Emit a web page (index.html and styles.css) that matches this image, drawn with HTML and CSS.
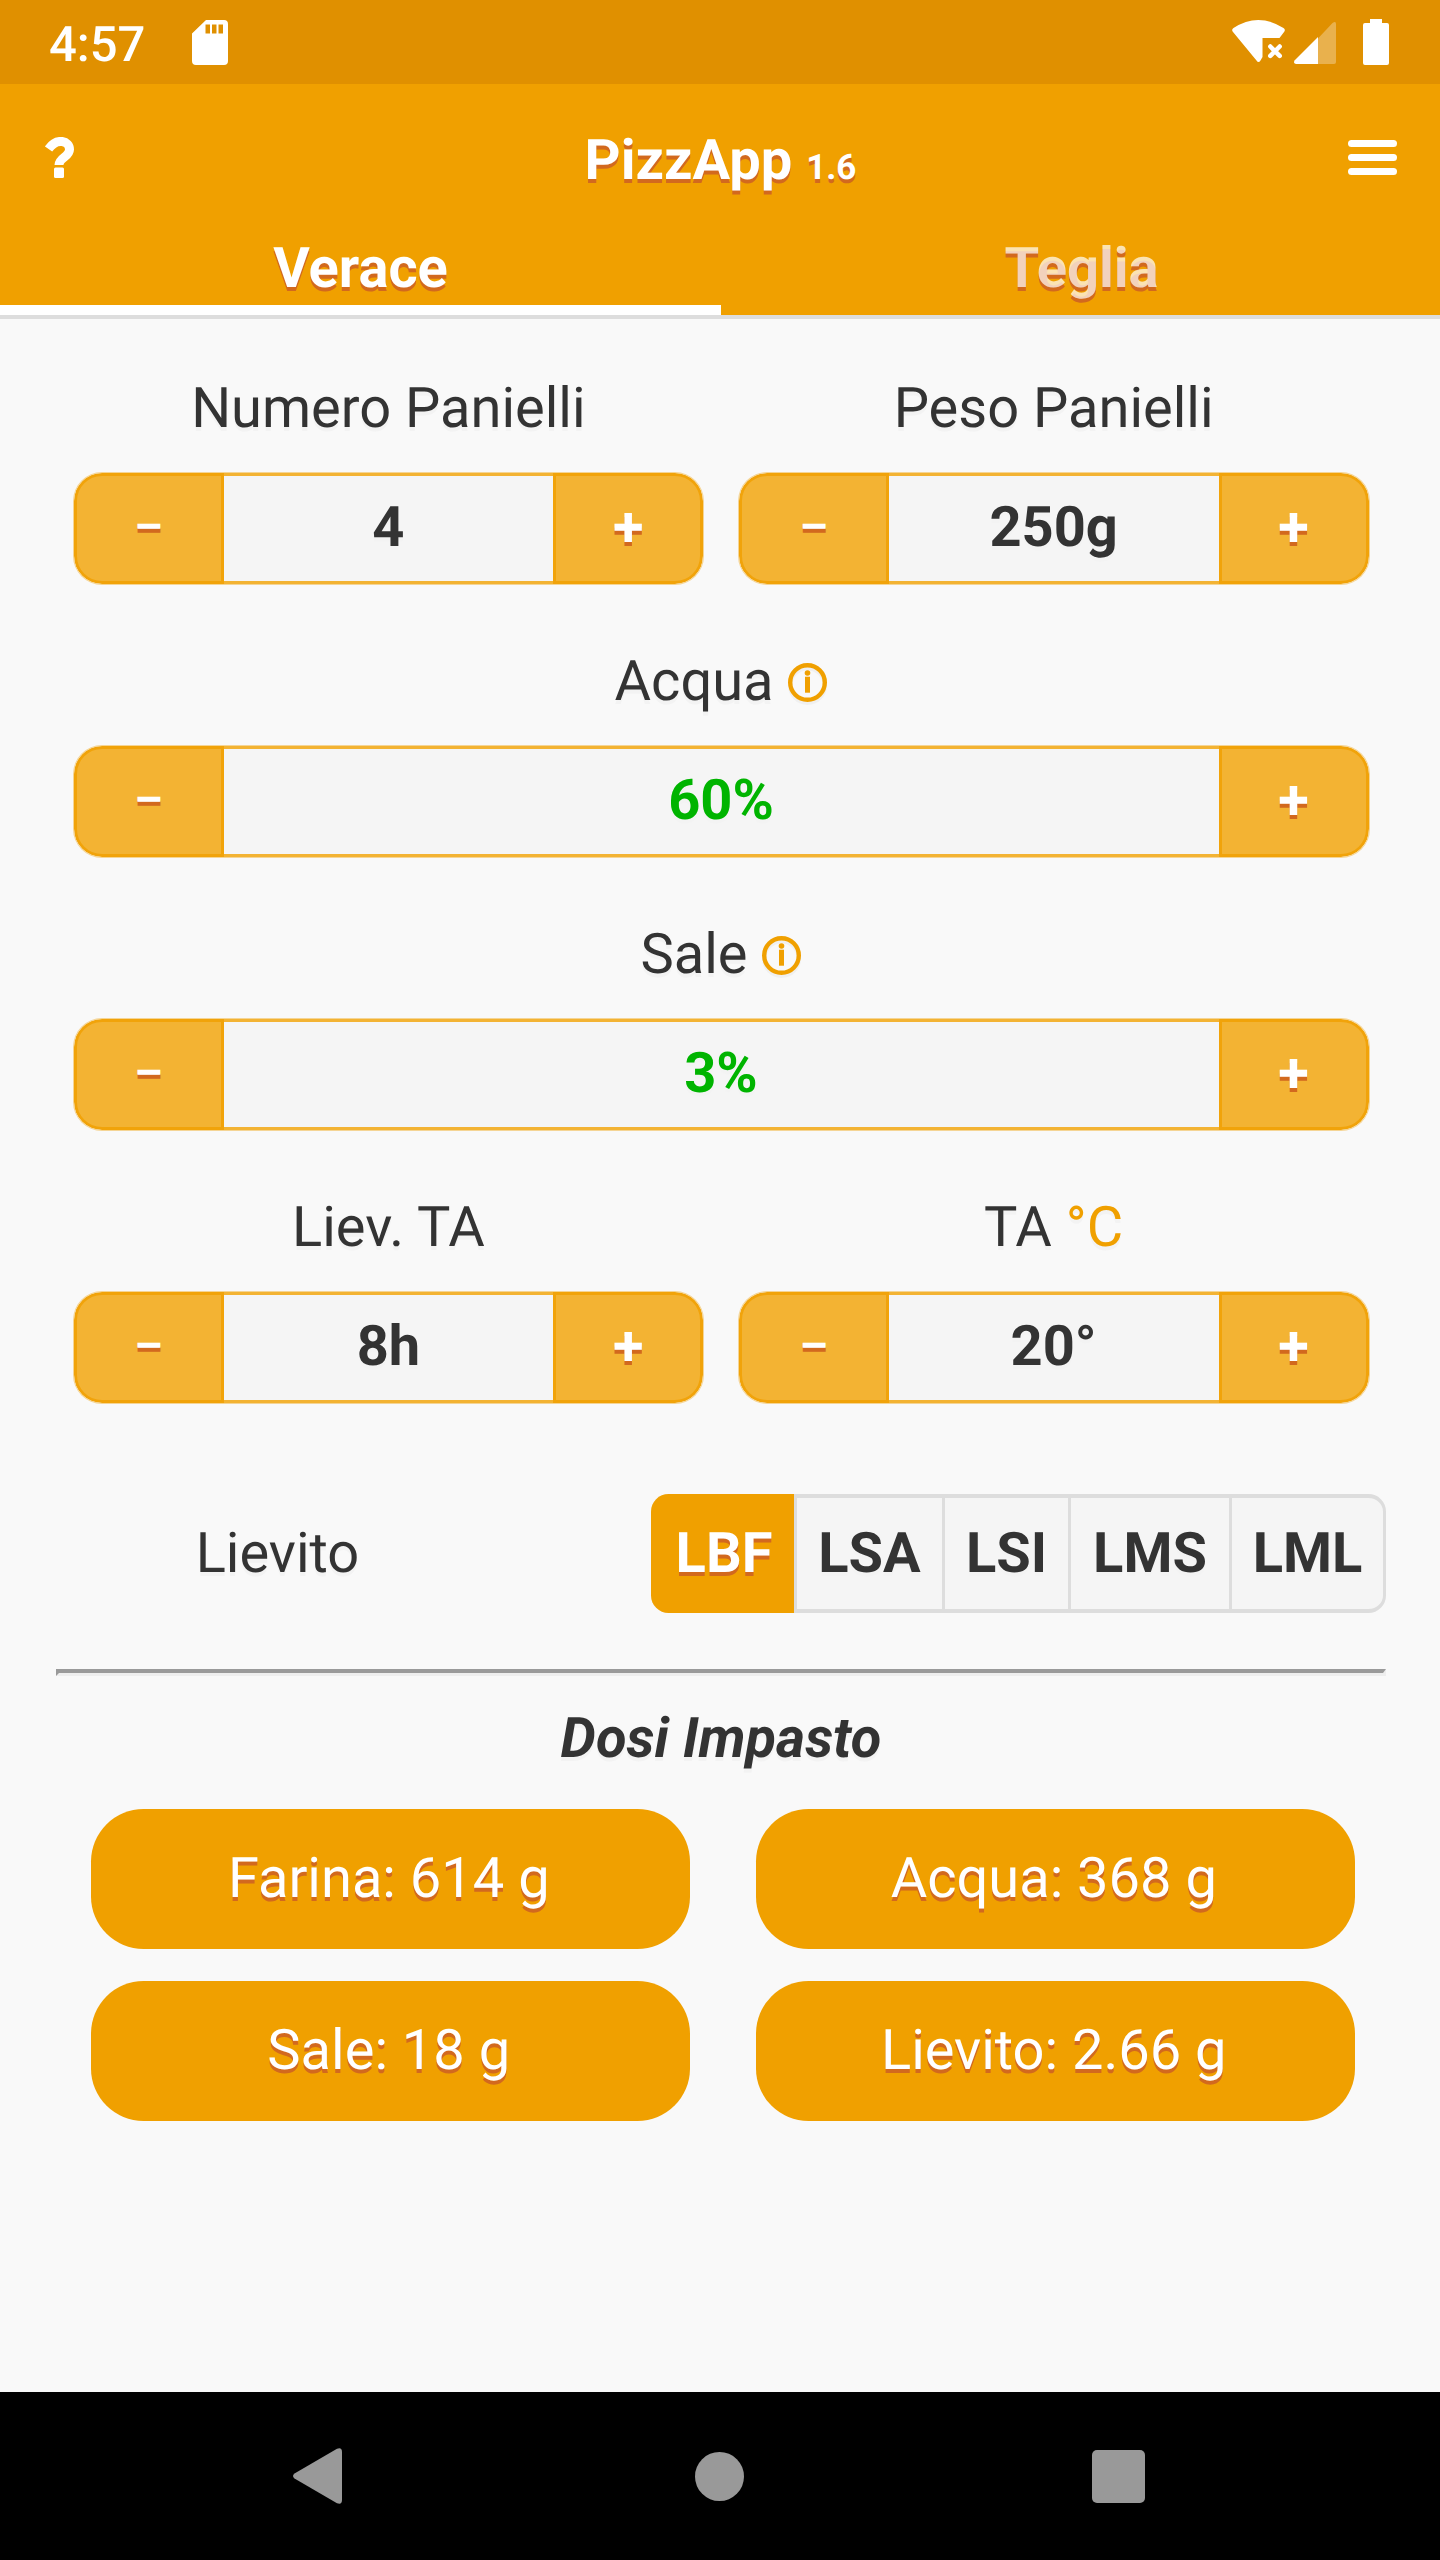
FILE: index.html
```html
<!DOCTYPE html>
<html lang="it">
<head>
<meta charset="utf-8">
<title>PizzApp</title>
<link rel="stylesheet" href="styles.css">
</head>
<body>
<div class="status">
  <span class="clock">4:57</span>
  <svg class="sd" width="36" height="45" viewBox="0 0 36 45"><path fill="#fff" fill-rule="evenodd" d="M14 0H32Q36 0 36 4V41Q36 45 32 45H4Q0 45 0 41V13.500Zm-.5 4.500v9h4.500v-9Zm6.500 0v9h4.500v-9Zm6.500 0v9h4.500v-9Z"/></svg>
  <svg class="signals" width="157" height="46" viewBox="0 0 157 46">
    <path fill="#fff" d="M.6 12.500Q-.6 10.500 1.500 9Q26-7.200 51.500 9Q53.600 10.500 52.400 12.500L47.500 19H30.500V38L28.500 41.500Q26.500 44.500 24.500 41.500Z"/>
    <path stroke="#fff" stroke-width="4.500" stroke-linecap="round" d="M38.300 27.500l9.400 9.400M47.700 27.500l-9.400 9.400"/>
    <path fill="#fff" fill-opacity=".3" d="M86 19.500L100.500 4Q104 1.500 104 5V43Q104 45 102 45H86Z"/>
    <path fill="#fff" d="M86 18V45H64Q61 44.500 62.500 41.500Z"/>
    <path fill="#fff" d="M138 0H150V4H155Q157 4 157 6V44Q157 46 155 46H133Q131 46 131 44V6Q131 4 133 4H138Z"/>
  </svg>
</div>
<header class="header">
  <div class="bar">
    <svg class="help" width="29" height="41" viewBox="0 0 29 41"><path fill="none" stroke="#fff" stroke-width="9" d="M3.500 12C12 0 24.500 4 24.500 12.500C24.500 20 14 20.500 14 28"/><rect x="9" y="30.500" width="10" height="10.500" rx="1.500" fill="#fff"/></svg>
    <h1 class="title">PizzApp <small>1.6</small></h1>
    <svg class="menu" width="49" height="35" viewBox="0 0 49 35" fill="#fff"><rect width="49" height="7" rx="3.500"/><rect y="14" width="49" height="7" rx="3.500"/><rect y="28" width="49" height="7" rx="3.500"/></svg>
  </div>
  <nav class="tabs"><a class="tab active">Verace</a><a class="tab">Teglia</a></nav>
</header>
<main class="content">
  <div class="row">
    <div class="field"><div class="label">Numero Panielli</div><div class="stepper"><b class="btn minus">–</b><span class="value">4</span><b class="btn plus">+</b></div></div>
    <div class="field"><div class="label">Peso Panielli</div><div class="stepper"><b class="btn minus">–</b><span class="value">250g</span><b class="btn plus">+</b></div></div>
  </div>
  <div class="row">
    <div class="field"><div class="label">Acqua <svg class="info" width="39" height="43" viewBox="0 0 39 43"><circle cx="19.500" cy="22.500" r="17.300" fill="none" stroke="#f0f0f0" stroke-width="4.400"/><g fill="#f0a000"><circle cx="19.500" cy="19.500" r="17.300" fill="none" stroke="#f0a000" stroke-width="4.400"/><circle cx="19.500" cy="10" r="2.800"/><rect x="17" y="13.700" width="5" height="16"/></g></svg></div><div class="stepper"><b class="btn minus">–</b><span class="value good">60%</span><b class="btn plus">+</b></div></div>
  </div>
  <div class="row">
    <div class="field"><div class="label">Sale <svg class="info" width="39" height="43" viewBox="0 0 39 43"><circle cx="19.500" cy="22.500" r="17.300" fill="none" stroke="#f0f0f0" stroke-width="4.400"/><g fill="#f0a000"><circle cx="19.500" cy="19.500" r="17.300" fill="none" stroke="#f0a000" stroke-width="4.400"/><circle cx="19.500" cy="10" r="2.800"/><rect x="17" y="13.700" width="5" height="16"/></g></svg></div><div class="stepper"><b class="btn minus">–</b><span class="value good">3%</span><b class="btn plus">+</b></div></div>
  </div>
  <div class="row">
    <div class="field"><div class="label">Liev. TA</div><div class="stepper"><b class="btn minus">–</b><span class="value">8h</span><b class="btn plus">+</b></div></div>
    <div class="field"><div class="label">TA <span class="unit">°C</span></div><div class="stepper"><b class="btn minus">–</b><span class="value">20°</span><b class="btn plus">+</b></div></div>
  </div>
  <div class="yeast">
    <div class="yeast-label">Lievito</div>
    <div class="segments"><b class="seg on">LBF</b><b class="seg">LSA</b><b class="seg">LSI</b><b class="seg">LMS</b><b class="seg">LML</b></div>
  </div>
  <div class="rule"></div>
  <h2 class="subtitle">Dosi Impasto</h2>
  <div class="doses">
    <div class="dose">Farina: 614 g</div><div class="dose">Acqua: 368 g</div>
    <div class="dose">Sale: 18 g</div><div class="dose">Lievito: 2.66 g</div>
  </div>
</main>
<footer class="navbar">
  <svg width="49" height="56" viewBox="0 0 49 56"><path fill="#999" d="M1.500 25.500L44 .8Q49-1 49 4V52Q49 57 44 55.200L1.500 30.500Q-1.500 28 1.500 25.500Z"/></svg>
  <svg class="home" width="49" height="49" viewBox="0 0 49 49"><circle cx="24.500" cy="24.500" r="24.500" fill="#999"/></svg>
  <svg width="53" height="53" viewBox="0 0 53 53"><rect width="53" height="53" rx="5" fill="#999"/></svg>
</footer>
</body>
</html>
```
FILE: styles.css
```css
* { box-sizing: border-box; }
body {
  margin: 0;
  width: 1440px;
  height: 2560px;
  display: flex;
  flex-direction: column;
  background: #f9f9f9;
  color: #333;
  font: 56px/72px Roboto, sans-serif;
  text-shadow: 0 3.5px 0 #f3f3f3;
  text-rendering: geometricPrecision;
}
svg { display: block; flex: none; }
.status {
  height: 84px;
  display: flex;
  align-items: flex-start;
  padding: 0 51px 0 49px;
  background: #e09000;
  color: #fff;
  text-shadow: none;
}
.clock { width: 142.5px; font-size: 49px; font-weight: 500; line-height: 90px; }
.sd { margin-top: 20px; }
.signals { margin: 19px 0 0 auto; }
.header {
  height: 235px;
  display: flex;
  flex-direction: column;
  background: #f0a000;
  border-bottom: 4px solid #ddd;
  color: #fff;
  text-shadow: 0 3.5px 0 #d2691e;
}
.bar {
  height: 137px;
  display: flex;
  justify-content: space-between;
  padding: 0 43px 0 45px;
}
.help { margin-top: 53px; }
.menu { margin-top: 56px; }
.title { margin: 40px 0 0 19px; font-size: 56px; font-weight: 700; line-height: 72px; }
.title small { font-size: 35px; }
.tabs { flex: 1; display: grid; grid-template-columns: 721px 721px; }
.tab {
  padding-top: 11px;
  border-bottom: 10.5px solid transparent;
  color: rgba(255, 255, 255, .7);
  font-weight: 700;
  text-align: center;
}
.tab.active { border-color: #fff; color: #fff; }
.content { flex: 1; padding: 53px 54px 0 56px; }
.row {
  height: 273px;
  display: flex;
  gap: 35.5px;
  padding: 0 17.5px;
}
.field { flex: 1; }
.label {
  height: 72px;
  display: flex;
  justify-content: center;
  white-space: pre;
}
.info { margin: 18px 0 0 1px; }
.unit { color: #f0a000; }
.stepper {
  height: 111px;
  margin-top: 29px;
  display: flex;
  overflow: hidden;
  border-radius: 28px;
  background: #f5f5f5;
  box-shadow: 0 0 0 1px rgba(240, 160, 0, .4);
}
.btn {
  width: 150px;
  border: 3px solid #f1a30a;
  background: #f3b333;
  color: #fff;
  line-height: 102px;
  text-align: center;
  text-shadow: 0 3.5px 0 #d2691e;
}
.minus { border-radius: 28px 0 0 28px; font-size: 45px; }
.plus { border-radius: 0 28px 28px 0; }
.value {
  flex: 1;
  border: solid #f3b333;
  border-width: 3px 0;
  font-weight: 700;
  line-height: 103px;
  text-align: center;
}
.good { color: #00b400; }
.yeast { display: flex; justify-content: space-between; margin-top: 30px; }
.yeast-label { width: 443px; line-height: 119px; text-align: center; }
.segments {
  display: grid;
  grid-template-columns: 143px 148px 126px 161px 157px;
  height: 119px;
}
.seg {
  border: solid #ddd;
  border-width: 4px 0 4px 3px;
  background: #f5f5f5;
  line-height: 111px;
  text-align: center;
}
.seg.on {
  border-color: #f0a000;
  border-radius: 17.5px 0 0 17.5px;
  background: #f0a000;
  color: #fff;
  text-shadow: 0 3.5px 0 #d2691e;
}
.seg:last-child { border-right-width: 3px; border-radius: 0 17.5px 17.5px 0; }
.rule {
  height: 7px;
  margin-top: 56px;
  border-style: solid;
  border-width: 4px 3px 3px;
  border-color: #9a9a9a #eee #eee #9a9a9a;
}
.subtitle { margin: 26px 0 0; font-size: 56px; font-style: italic; font-weight: 700; line-height: 72px; text-align: center; }
.doses {
  display: grid;
  grid-template-columns: 1fr 1fr;
  gap: 32px 66.5px;
  margin-top: 35px;
  padding: 0 31.5px 0 35px;
}
.dose {
  height: 140px;
  padding-right: 3px;
  border-radius: 52.5px;
  background: #f0a000;
  color: #fff;
  line-height: 138px;
  text-align: center;
  text-shadow: 0 3.5px 0 #d2691e;
}
.navbar {
  height: 168px;
  display: flex;
  align-items: center;
  justify-content: space-between;
  padding: 0 295px 0 293px;
  background: #000;
}
.home { margin-left: 4px; }
```
